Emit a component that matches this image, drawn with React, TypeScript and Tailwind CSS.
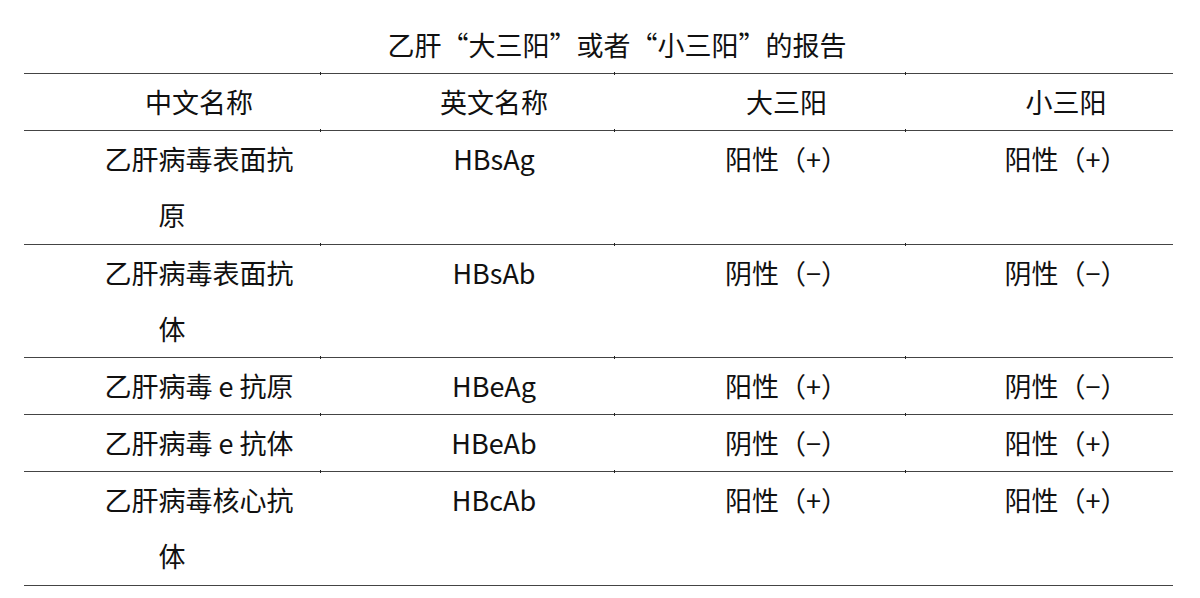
const font = { fontFamily: '"Noto Sans CJK SC", "Noto Sans", sans-serif' };

interface Row {
  cn: string[];
  en: string;
  big: string;
  small: string;
}

const rows: Row[] = [
  { cn: ['乙肝病毒表面抗', '原'], en: 'HBsAg', big: '阳性（+）', small: '阳性（+）' },
  { cn: ['乙肝病毒表面抗', '体'], en: 'HBsAb', big: '阴性（−）', small: '阴性（−）' },
  { cn: ['乙肝病毒 e 抗原'], en: 'HBeAg', big: '阳性（+）', small: '阴性（−）' },
  { cn: ['乙肝病毒 e 抗体'], en: 'HBeAb', big: '阴性（−）', small: '阳性（+）' },
  { cn: ['乙肝病毒核心抗', '体'], en: 'HBcAb', big: '阳性（+）', small: '阳性（+）' },
];

const Cell = ({ children, first, tall }: { children: React.ReactNode; first?: boolean; tall?: boolean }) => (
  <div className={`relative text-center indent-[2em] ${tall ? 'leading-[56.25px]' : 'leading-[56px]'}`}>
    {!first && <span className="absolute left-0 -top-[2px] w-px h-[3px] bg-[#222]" />}
    {children}
  </div>
);

export default function App() {
  return (
    <div className="w-[1200px] h-[598px] bg-white text-[#111] overflow-hidden" style={font}>
      <h1 className="pt-[17px] pl-[34px] text-center text-[27px] font-normal leading-[56px]">
        乙肝“大三阳”或者“小三阳”的报告
      </h1>
      <div className="ml-[24px] w-[1149px] border-t border-[#444] text-[27px]">
        <div className="grid grid-cols-[296px_294px_291px_268px] border-b border-[#444]">
          <Cell first>中文名称</Cell>
          <Cell>英文名称</Cell>
          <Cell>大三阳</Cell>
          <Cell>小三阳</Cell>
        </div>
        {rows.map((r, i) => {
          const tall = r.cn.length > 1;
          return (
            <div key={i} className="grid grid-cols-[296px_294px_291px_268px] border-b border-[#444] relative">
              <Cell first tall={tall}>
                {r.cn[0]}
                {tall && (
                  <>
                    <br />
                    {r.cn[1]}
                  </>
                )}
              </Cell>
              <Cell tall={tall}>{r.en}</Cell>
              <Cell tall={tall}>{r.big}</Cell>
              <Cell tall={tall}>{r.small}</Cell>
            </div>
          );
        })}
      </div>
    </div>
  );
}
